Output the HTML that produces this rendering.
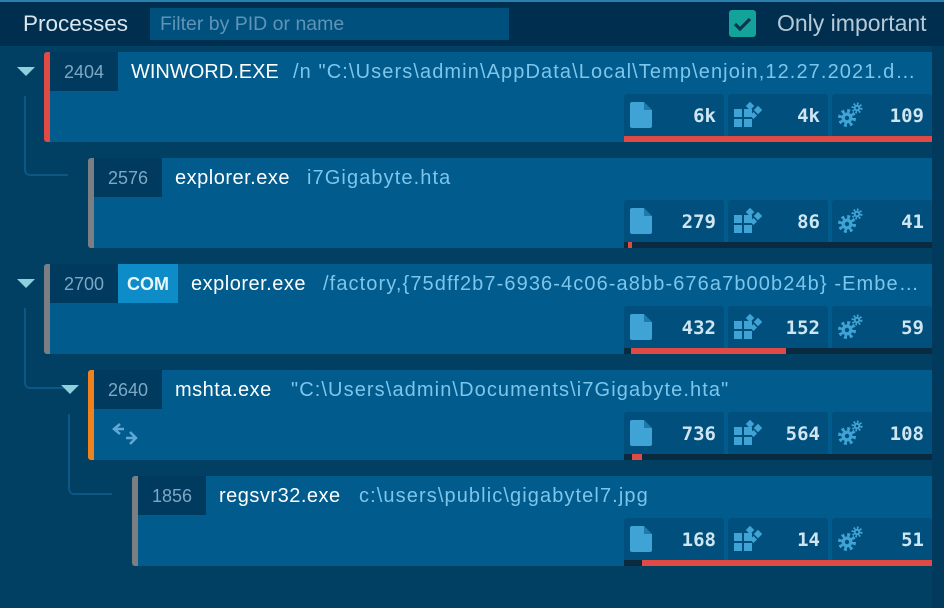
<!DOCTYPE html><html><head><style>
*{margin:0;padding:0;box-sizing:border-box}
body{width:944px;height:608px;background:#013f63;font-family:"Liberation Sans",sans-serif;position:relative;overflow:hidden}
.top{position:absolute;left:0;top:0;width:944px;height:2px;background:#2a7fae}
.hdr{position:absolute;left:0;top:2px;width:944px;height:44px;background:#002e4e}
.hdr .t{position:absolute;left:23px;top:9px;font-size:22.5px;color:#d9e6ee}
.hdr .f{position:absolute;left:150px;top:6px;width:359px;height:32px;background:#00507e;color:#5f94b6;font-size:19.5px;padding:5px 10px}
.cb{position:absolute;left:729px;top:8px;width:27px;height:27px;background:#14a39a;border-radius:3px}
.hdr .oi{position:absolute;left:777px;top:8px;font-size:23px;color:#b5cad8}
.scroll{position:absolute;left:932px;top:46px;width:12px;height:562px;background:#013a5c}
.card{position:absolute;right:12px;height:90px;background:#015b8c;border-radius:3px 0 0 3px}
.card .bl{position:absolute;left:0;top:0;width:6px;height:90px;border-radius:3px 0 0 3px}
.pid{position:absolute;left:6px;top:0;width:68px;height:39px;background:#003a5e;color:#7da8c4;font-size:18px;text-align:center;line-height:40px}
.nm{position:absolute;top:9px;font-size:20px;color:#fff;white-space:nowrap;letter-spacing:0.5px}
.cmd{position:absolute;top:9px;font-size:20px;color:#7cc6ec;white-space:nowrap;overflow:hidden;text-overflow:ellipsis;letter-spacing:1.1px}
.com{position:absolute;left:74px;top:0;width:60px;height:39px;background:#0d8cc7;color:#e8f6fc;font-weight:bold;font-size:18px;text-align:center;line-height:40px}
.st{position:absolute;right:0;top:42px;width:308px;height:48px}
.cell{position:absolute;top:0;height:42px;width:100px;background:#004f7c;border-radius:3px 3px 0 0}
.cell svg{position:absolute;left:6px;top:8px}
.cell span{position:absolute;right:8px;top:11px;font-family:"DejaVu Sans Mono","Liberation Mono",monospace;font-weight:bold;font-size:19px;color:#cfe6f2}
.bar{position:absolute;left:0;top:42px;width:308px;height:6px;background:#0a2a3f}
.bar i{position:absolute;top:0;height:6px;background:#e04a44}
.tri{position:absolute;width:0;height:0;border-left:9px solid transparent;border-right:9px solid transparent;border-top:9px solid #8fd0dc}
.ln{position:absolute;border-left:2px solid #0c5784;border-bottom:2px solid #0c5784;border-radius:0 0 0 6px}
</style></head><body>
<div class="top"></div>
<div class="hdr"><div class="t">Processes</div><div class="f">Filter by PID or name</div>
<div class="cb"><svg width="27" height="27"><path d="M6 14l5 5 10-10" stroke="#0b3550" stroke-width="3.2" fill="none"/></svg></div>
<div class="oi">Only important</div></div>
<div class="scroll"></div>

<svg width="0" height="0" style="position:absolute"><defs>
<symbol id="file" viewBox="0 0 22 26"><path d="M2 0h12l8 8v16a2 2 0 0 1-2 2H2a2 2 0 0 1-2-2V2a2 2 0 0 1 2-2z" fill="#3fa3d6"/><path d="M14 0v8h8z" fill="#004f7c" opacity=".5"/></symbol>
<symbol id="mod" viewBox="0 0 28 26"><rect x="0" y="7" width="8" height="8" fill="#3fa3d6"/><rect x="0" y="17" width="8" height="8" fill="#3fa3d6"/><rect x="10" y="17" width="8" height="8" fill="#3fa3d6"/><rect x="10" y="7" width="8" height="8" fill="#3fa3d6"/><rect x="13" y="1" width="6" height="6" transform="rotate(45 16 4)" fill="#3fa3d6"/><rect x="21" y="5" width="6" height="6" transform="rotate(45 24 8)" fill="#3fa3d6"/><rect x="17" y="11" width="5" height="5" transform="rotate(45 19.5 13.5)" fill="#3fa3d6"/></symbol>
<symbol id="gear" viewBox="0 0 26 26"><circle cx="9" cy="16" r="6.5" fill="none" stroke="#3fa3d6" stroke-width="5" stroke-dasharray="2.6 2.5"/><circle cx="9" cy="16" r="5.5" fill="#3fa3d6"/><circle cx="9" cy="16" r="2.2" fill="#004f7c"/><circle cx="19" cy="6" r="4" fill="none" stroke="#3fa3d6" stroke-width="3" stroke-dasharray="1.6 1.5"/><circle cx="19" cy="6" r="3.2" fill="#3fa3d6"/><circle cx="19" cy="6" r="1.3" fill="#004f7c"/></symbol>
</defs></svg>

<div class="tri" style="left:17px;top:67px"></div>
<div class="ln" style="left:24px;top:96px;width:44px;height:80px"></div>
<div class="tri" style="left:17px;top:279px"></div>
<div class="ln" style="left:24px;top:308px;width:44px;height:81px"></div>
<div class="tri" style="left:61px;top:385px"></div>
<div class="ln" style="left:68px;top:414px;width:44px;height:81px"></div>

<div class="card" style="left:44px;top:52px"><div class="bl" style="background:#e04a44"></div><div class="pid">2404</div>
<div class="nm" style="left:87px;letter-spacing:0">WINWORD.EXE</div><div class="cmd" style="left:249px;width:629px">/n "C:\Users\admin\AppData\Local\Temp\enjoin,12.27.2021.doc"</div>
<div class="st"><div class="cell" style="left:0"><svg width="22" height="26"><use href="#file"/></svg><span>6k</span></div><div class="cell" style="left:104px"><svg width="28" height="26"><use href="#mod"/></svg><span>4k</span></div><div class="cell" style="left:208px"><svg width="26" height="26"><use href="#gear"/></svg><span>109</span></div><div class="bar"><i style="left:0;width:308px"></i></div></div></div>

<div class="card" style="left:88px;top:158px"><div class="bl" style="background:#7b7f83"></div><div class="pid">2576</div>
<div class="nm" style="left:87px">explorer.exe</div><div class="cmd" style="left:219px;width:600px">i7Gigabyte.hta</div>
<div class="st"><div class="cell" style="left:0"><svg width="22" height="26"><use href="#file"/></svg><span>279</span></div><div class="cell" style="left:104px"><svg width="28" height="26"><use href="#mod"/></svg><span>86</span></div><div class="cell" style="left:208px"><svg width="26" height="26"><use href="#gear"/></svg><span>41</span></div><div class="bar"><i style="left:4px;width:4px"></i></div></div></div>

<div class="card" style="left:44px;top:264px"><div class="bl" style="background:#7b7f83"></div><div class="pid">2700</div><div class="com">COM</div>
<div class="nm" style="left:147px">explorer.exe</div><div class="cmd" style="left:279px;width:599px">/factory,{75dff2b7-6936-4c06-a8bb-676a7b00b24b} -Embedding</div>
<div class="st"><div class="cell" style="left:0"><svg width="22" height="26"><use href="#file"/></svg><span>432</span></div><div class="cell" style="left:104px"><svg width="28" height="26"><use href="#mod"/></svg><span>152</span></div><div class="cell" style="left:208px"><svg width="26" height="26"><use href="#gear"/></svg><span>59</span></div><div class="bar"><i style="left:7px;width:155px"></i></div></div></div>

<div class="card" style="left:88px;top:370px"><div class="bl" style="background:#f0821e"></div><div class="pid">2640</div>
<div class="nm" style="left:87px">mshta.exe</div><div class="cmd" style="left:203px;width:600px">"C:\Users\admin\Documents\i7Gigabyte.hta"</div>
<svg style="position:absolute;left:22px;top:50px" width="30" height="28"><path d="M10 4l-6 5 6 5M4 9h10M20 12l6 6-6 6M26 18H16" stroke="#5fa9d4" stroke-width="2.5" fill="none"/></svg>
<div class="st"><div class="cell" style="left:0"><svg width="22" height="26"><use href="#file"/></svg><span>736</span></div><div class="cell" style="left:104px"><svg width="28" height="26"><use href="#mod"/></svg><span>564</span></div><div class="cell" style="left:208px"><svg width="26" height="26"><use href="#gear"/></svg><span>108</span></div><div class="bar"><i style="left:8px;width:10px"></i></div></div></div>

<div class="card" style="left:132px;top:476px"><div class="bl" style="background:#7b7f83"></div><div class="pid">1856</div>
<div class="nm" style="left:87px">regsvr32.exe</div><div class="cmd" style="left:227px;width:500px">c:\users\public\gigabytel7.jpg</div>
<div class="st"><div class="cell" style="left:0"><svg width="22" height="26"><use href="#file"/></svg><span>168</span></div><div class="cell" style="left:104px"><svg width="28" height="26"><use href="#mod"/></svg><span>14</span></div><div class="cell" style="left:208px"><svg width="26" height="26"><use href="#gear"/></svg><span>51</span></div><div class="bar"><i style="left:18px;width:290px"></i></div></div></div>
</body></html>
